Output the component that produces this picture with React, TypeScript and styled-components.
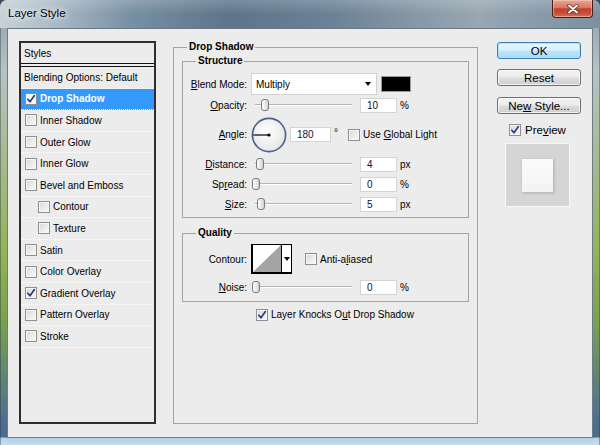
import React from 'react';
import styled, { createGlobalStyle } from 'styled-components';

const Global = createGlobalStyle`
  html, body { margin: 0; padding: 0; width: 600px; height: 445px; overflow: hidden; background: #3d4d5c; }
  body { font-family: "Liberation Sans", Arial, sans-serif; font-size: 10px; color: #000; }
  * { box-sizing: border-box; }
`;

const Frame = styled.div`
  width: 600px;
  height: 445px;
  display: flex;
  flex-direction: column;
  border-radius: 7px 7px 0 0;
  overflow: hidden;
  background:
    linear-gradient(90deg, rgba(30, 45, 60, 0.7) 0, rgba(30, 45, 60, 0) 1px, rgba(30, 45, 60, 0) 599px, rgba(30, 45, 60, 0.7) 600px),
    linear-gradient(180deg, #8c9ca8 0px, #b7c2c3 70px, #a8b98f 160px, #92b35a 250px, #7aa24c 320px, #4d7090 420px, #4b6c8a 437px, #b4cfe6 438px, #c9dded 445px);
`;

const TitleBar = styled.div`
  height: 28px;
  flex-shrink: 0;
  display: flex;
  align-items: flex-start;
  padding-left: 8px;
  background:
    linear-gradient(180deg, rgba(255, 255, 255, 0.18) 0, rgba(255, 255, 255, 0) 14px),
    linear-gradient(90deg, #c7d1d7 0px, #aebcc7 50px, #7890a3 130px, #5d7489 230px, #6a8196 330px, #8899a6 420px, #98a7b2 480px, #879aa9 540px, #7d909f 600px);
`;

const TitleText = styled.span`
  flex: 1;
  font-size: 11.5px;
  line-height: 27px;
  color: #000;
  text-shadow: 0 0 5px #fff, 0 0 9px rgba(255, 255, 255, 0.9);
`;

const CloseButton = styled.div`
  width: 41px;
  height: 18px;
  margin-right: 7px;
  border: 1px solid #4e1a12;
  border-top: none;
  border-radius: 0 0 4px 4px;
  background: linear-gradient(180deg, #e9a797 0%, #d9765f 45%, #c1402a 52%, #c9503a 80%, #d9735a 100%);
  box-shadow: inset 0 0 0 1px rgba(255, 220, 210, 0.45);
  display: flex;
  align-items: center;
  justify-content: center;
`;

const Client = styled.div`
  flex: 1;
  margin: 0 7px 7px;
  border: 1px solid #6b7b88;
  background: #ececec;
  display: flex;
  align-items: flex-start;
  padding: 12px 11px 0 11px;
`;

/* ---------- Left styles panel ---------- */

const StylesPanel = styled.div`
  width: 137px;
  height: 383px;
  margin-right: 17px;
  flex-shrink: 0;
  border: 2px solid #2e2e2e;
  background: #ececec;
  display: flex;
  flex-direction: column;
`;

const PanelHeader = styled.div`
  height: 21px;
  padding-left: 3px;
  display: flex;
  align-items: center;
  border-bottom: 1px solid #111;
`;

const StyleList = styled.div`
  margin-top: 2px;
  border-top: 1px solid #111;
  display: flex;
  flex-direction: column;
`;

const StyleRow = styled.div<{ $selected?: boolean; $indent?: number }>`
  height: 21.6px;
  flex-shrink: 0;
  display: flex;
  align-items: center;
  gap: 3px;
  padding-left: ${(p) => p.$indent ?? 4}px;
  border-bottom: 1px dotted #ffffff;
  background: ${(p) => (p.$selected ? '#3399ff' : 'transparent')};
  color: ${(p) => (p.$selected ? '#fff' : '#000')};
  font-weight: ${(p) => (p.$selected ? 'bold' : 'normal')};
  white-space: nowrap;
`;

/* ---------- Checkbox ---------- */

const CheckBox = styled.span<{ $light?: boolean }>`
  width: 12px;
  height: 12px;
  flex-shrink: 0;
  display: inline-flex;
  align-items: center;
  justify-content: center;
  border: 1px solid #8e8f8f;
  background: ${(p) => (p.$light ? '#fafafa' : 'linear-gradient(135deg, #d4d6d9 0%, #eeeeee 60%, #f8f8f8 100%)')};
  box-shadow: inset 0 0 0 1px #f6f6f6;
`;

const Check: React.FC<{ on?: boolean; light?: boolean }> = ({ on, light }) => (
  <CheckBox $light={light}>
    {on && (
      <svg width="10" height="10" viewBox="0 0 10 10">
        <path d="M1.8 5.2 L4 7.8 L8.4 1.6" fill="none" stroke="#253e8a" strokeWidth="1.7" strokeLinecap="round" strokeLinejoin="round" />
      </svg>
    )}
  </CheckBox>
);

/* ---------- Group boxes ---------- */

const Group = styled.fieldset`
  margin: 0;
  padding: 0;
  min-width: 0;
  border: 1px solid #a3a3a3;
`;

const OuterGroup = styled(Group)`
  width: 305px;
  height: 383px;
  margin-right: 19px;
  flex-shrink: 0;
`;

const SubGroup = styled(Group)<{ $top?: number }>`
  margin-top: ${(p) => p.$top ?? 0}px;
`;

const Legend = styled.legend`
  font-weight: bold;
  font-size: 10px;
  line-height: 12px;
  padding: 0 2px;
  margin-left: 13px;
`;

const GroupBody = styled.div<{ $pad: string }>`
  padding: ${(p) => p.$pad};
  display: flex;
  flex-direction: column;
`;

const Row = styled.div<{ $h: number; $top?: number; $left?: number }>`
  height: ${(p) => p.$h}px;
  margin-top: ${(p) => p.$top ?? 0}px;
  margin-left: ${(p) => p.$left ?? 0}px;
  display: flex;
  align-items: center;
  white-space: nowrap;
`;

const Label = styled.span`
  width: 64px;
  flex-shrink: 0;
  text-align: right;
  margin-right: 4px;
`;

const Key = styled.span`
  text-decoration: underline;
`;

const Select = styled.div`
  width: 126px;
  height: 22px;
  margin-right: 4px;
  background: #fff;
  border: 1px solid #d2d2d2;
  display: flex;
  align-items: center;
  justify-content: space-between;
  padding: 0 5px 0 4px;
`;

const Arrow = styled.span`
  width: 0;
  height: 0;
  border-left: 3.5px solid transparent;
  border-right: 3.5px solid transparent;
  border-top: 4px solid #000;
`;

const ColorSwatch = styled.div`
  width: 30px;
  height: 16px;
  background: #000;
  border: 1px solid #9a9a9a;
`;

const Slider = styled.div`
  width: 105px;
  height: 14px;
  flex-shrink: 0;
  position: relative;
  background: linear-gradient(180deg, transparent 6px, #b5b5b5 6px, #b5b5b5 7px, #ffffff 7px, #ffffff 8px, transparent 8px) no-repeat 4px 0 / 97px 14px;
`;

const Thumb = styled.span<{ $pos: number }>`
  position: absolute;
  left: ${(p) => p.$pos}px;
  top: 1px;
  width: 8px;
  height: 12px;
  border: 1px solid #7b7b7b;
  border-radius: 3px;
  background: linear-gradient(90deg, #fdfdfd 0%, #e6e6e6 60%, #cfcfcf 100%);
`;

const NumInput = styled.div<{ $w?: number; $ml?: number }>`
  width: ${(p) => p.$w ?? 37}px;
  height: 15px;
  margin-left: ${(p) => p.$ml ?? 4}px;
  flex-shrink: 0;
  background: #fff;
  border: 1px solid #d4d4d4;
  padding-left: 6px;
  display: flex;
  align-items: center;
  color: #101030;
`;

const Unit = styled.span`
  margin-left: 3px;
`;

const Degree = styled.span`
  margin-left: 3px;
  margin-right: 10px;
  align-self: flex-start;
  margin-top: 12px;
`;

const CheckLabel = styled.span`
  margin-left: 3px;
`;

const Dial = styled.svg`
  flex-shrink: 0;
  margin-right: 3px;
`;

const ContourPicker = styled.div`
  width: 41px;
  height: 30px;
  margin-right: 13px;
  flex-shrink: 0;
  display: flex;
  border: 1px solid #000;
  border-left-width: 2px;
  border-bottom-width: 2px;
  background: #fff;
`;

const ContourDrop = styled.div`
  width: 10px;
  border-left: 1px solid #000;
  display: flex;
  align-items: center;
  justify-content: center;
`;

/* ---------- Right column ---------- */

const SideColumn = styled.div`
  width: 84px;
  flex-shrink: 0;
  display: flex;
  flex-direction: column;
`;

const Button = styled.div<{ $primary?: boolean; $top: number }>`
  height: 17px;
  margin-top: ${(p) => p.$top}px;
  border: 1px solid ${(p) => (p.$primary ? '#3c7fb1' : '#707070')};
  border-radius: 3px;
  font-size: 11.5px;
  display: flex;
  align-items: center;
  justify-content: center;
  background: ${(p) =>
    p.$primary
      ? 'linear-gradient(180deg, #eaf6fd 0%, #d9f0fc 48%, #bee6fd 52%, #a7d9f5 100%)'
      : 'linear-gradient(180deg, #f2f2f2 0%, #ebebeb 48%, #dddddd 52%, #cfcfcf 100%)'};
  box-shadow: inset 0 0 0 1px ${(p) => (p.$primary ? 'rgba(160, 230, 255, 0.9)' : 'rgba(255, 255, 255, 0.7)')};
`;

const PreviewRow = styled.div`
  height: 16px;
  margin-top: 8px;
  margin-left: 12px;
  display: flex;
  align-items: center;
  gap: 4px;
  font-size: 11.5px;
`;

const PreviewBox = styled.div`
  width: 65px;
  height: 64px;
  margin-top: 5px;
  margin-left: 8px;
  border: 1px solid #f7f7f7;
  background-color: #d9d9d9;
  background-image: radial-gradient(circle, #cfcfcf 0.6px, transparent 0.8px);
  background-size: 2px 2px;
  display: flex;
  align-items: center;
  justify-content: center;
`;

const PreviewTile = styled.div`
  width: 31px;
  height: 33px;
  background: linear-gradient(180deg, #fbfbfb 0%, #f3f3f3 100%);
  box-shadow: 1px 1px 3px rgba(0, 0, 0, 0.18), 0 0 1px rgba(0, 0, 0, 0.08);
`;

const listItems: { label: string; checked?: boolean; indent?: boolean; selected?: boolean }[] = [
  { label: 'Drop Shadow', checked: true, selected: true },
  { label: 'Inner Shadow' },
  { label: 'Outer Glow' },
  { label: 'Inner Glow' },
  { label: 'Bevel and Emboss' },
  { label: 'Contour', indent: true },
  { label: 'Texture', indent: true },
  { label: 'Satin' },
  { label: 'Color Overlay' },
  { label: 'Gradient Overlay', checked: true },
  { label: 'Pattern Overlay' },
  { label: 'Stroke' },
];

const App: React.FC = () => (
  <>
    <Global />
    <Frame>
      <TitleBar>
        <TitleText>Layer Style</TitleText>
        <CloseButton>
          <svg width="12" height="10" viewBox="0 0 12 10">
            <path d="M2 1.5 L10 8.5 M10 1.5 L2 8.5" stroke="#5a2a20" strokeWidth="3.4" strokeLinecap="round" />
            <path d="M2 1.5 L10 8.5 M10 1.5 L2 8.5" stroke="#ffffff" strokeWidth="2" strokeLinecap="round" />
          </svg>
        </CloseButton>
      </TitleBar>
      <Client>
        <StylesPanel>
          <PanelHeader>Styles</PanelHeader>
          <StyleList>
            <StyleRow $indent={3}>Blending Options: Default</StyleRow>
            {listItems.map((it) => (
              <StyleRow key={it.label} $selected={it.selected} $indent={it.indent ? 17 : 4}>
                <Check on={it.checked} light={it.selected} />
                {it.label}
              </StyleRow>
            ))}
          </StyleList>
        </StylesPanel>

        <OuterGroup>
          <Legend>Drop Shadow</Legend>
          <GroupBody $pad="2px 8px 0 8px">
            <SubGroup>
              <Legend>Structure</Legend>
              <GroupBody $pad="6px 0 3px 0">
                <Row $h={22}>
                  <Label>
                    <Key>B</Key>lend Mode:
                  </Label>
                  <Select>
                    <span>Multiply</span>
                    <Arrow />
                  </Select>
                  <ColorSwatch />
                </Row>
                <Row $h={20}>
                  <Label>
                    <Key>O</Key>pacity:
                  </Label>
                  <Slider>
                    <Thumb $pos={10} />
                  </Slider>
                  <NumInput>10</NumInput>
                  <Unit>%</Unit>
                </Row>
                <Row $h={39}>
                  <Label>
                    <Key>A</Key>ngle:
                  </Label>
                  <Dial width="36" height="36" viewBox="0 0 36 36">
                    <defs>
                      <radialGradient id="dialFill" cx="45%" cy="40%" r="65%">
                        <stop offset="0%" stopColor="#ffffff" />
                        <stop offset="100%" stopColor="#e4e4e4" />
                      </radialGradient>
                    </defs>
                    <circle cx="18" cy="18" r="16.6" fill="url(#dialFill)" stroke="#4c5f8e" strokeWidth="1.6" />
                    <line x1="1.8" y1="18" x2="18" y2="18" stroke="#000" strokeWidth="1.2" />
                    <circle cx="18" cy="18" r="1.6" fill="#000" />
                  </Dial>
                  <NumInput $w={41} $ml={0}>180</NumInput>
                  <Degree>°</Degree>
                  <Check />
                  <CheckLabel>
                    Use <Key>G</Key>lobal Light
                  </CheckLabel>
                </Row>
                <Row $h={20}>
                  <Label>
                    <Key>D</Key>istance:
                  </Label>
                  <Slider>
                    <Thumb $pos={5} />
                  </Slider>
                  <NumInput>4</NumInput>
                  <Unit>px</Unit>
                </Row>
                <Row $h={20}>
                  <Label>
                    Sp<Key>r</Key>ead:
                  </Label>
                  <Slider>
                    <Thumb $pos={1} />
                  </Slider>
                  <NumInput>0</NumInput>
                  <Unit>%</Unit>
                </Row>
                <Row $h={20}>
                  <Label>
                    <Key>S</Key>ize:
                  </Label>
                  <Slider>
                    <Thumb $pos={6} />
                  </Slider>
                  <NumInput>5</NumInput>
                  <Unit>px</Unit>
                </Row>
              </GroupBody>
            </SubGroup>

            <SubGroup $top={9}>
              <Legend>Quality</Legend>
              <GroupBody $pad="0 0 4px 0">
                <Row $h={30} $top={5}>
                  <Label>Contour:</Label>
                  <ContourPicker>
                    <svg width="28" height="27" viewBox="0 0 28 27">
                      <polygon points="0,27 28,0 28,27" fill="#a4a4a4" />
                    </svg>
                    <ContourDrop>
                      <Arrow />
                    </ContourDrop>
                  </ContourPicker>
                  <Check />
                  <CheckLabel>
                    Anti-a<Key>l</Key>iased
                  </CheckLabel>
                </Row>
                <Row $h={20} $top={3}>
                  <Label>
                    <Key>N</Key>oise:
                  </Label>
                  <Slider>
                    <Thumb $pos={1} />
                  </Slider>
                  <NumInput>0</NumInput>
                  <Unit>%</Unit>
                </Row>
              </GroupBody>
            </SubGroup>

            <Row $h={19} $top={3} $left={74}>
              <Check on />
              <CheckLabel>
                Layer Knocks O<Key>u</Key>t Drop Shadow
              </CheckLabel>
            </Row>
          </GroupBody>
        </OuterGroup>

        <SideColumn>
          <Button $primary $top={1}>OK</Button>
          <Button $top={10}>Reset</Button>
          <Button $top={11}>
            <span>
              Ne<Key>w</Key> Style...
            </span>
          </Button>
          <PreviewRow>
            <Check on />
            <span>
              Pre<Key>v</Key>iew
            </span>
          </PreviewRow>
          <PreviewBox>
            <PreviewTile />
          </PreviewBox>
        </SideColumn>
      </Client>
    </Frame>
  </>
);

export default App;
